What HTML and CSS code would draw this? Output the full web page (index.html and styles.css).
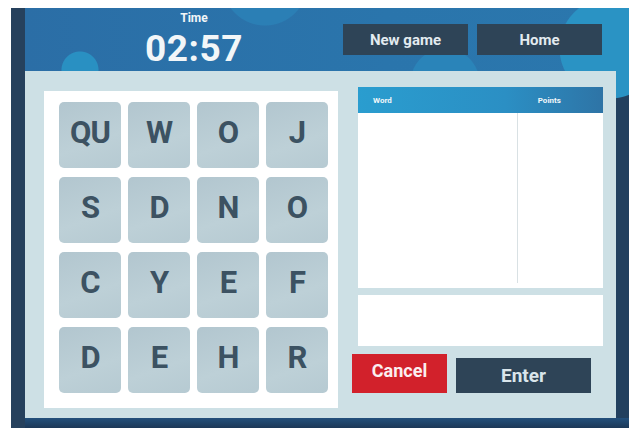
FILE: index.html
```html
<!DOCTYPE html>
<html lang="en">
<head>
<meta charset="utf-8">
<title>Word Grid</title>
<link rel="stylesheet" href="styles.css">
</head>
<body>
<div class="app">
  <header class="topbar">
    <div class="timer">
      <div class="timer-label">Time</div>
      <div class="timer-value">02:57</div>
    </div>
    <nav class="actions">
      <button class="btn btn-dark">New game</button>
      <button class="btn btn-dark">Home</button>
    </nav>
  </header>
  <main class="panel">
    <section class="board">
      <div class="tile">QU</div><div class="tile">W</div><div class="tile">O</div><div class="tile">J</div>
      <div class="tile">S</div><div class="tile">D</div><div class="tile">N</div><div class="tile">O</div>
      <div class="tile">C</div><div class="tile">Y</div><div class="tile">E</div><div class="tile">F</div>
      <div class="tile">D</div><div class="tile">E</div><div class="tile">H</div><div class="tile">R</div>
    </section>
    <section class="side">
      <div class="words">
        <div class="words-head"><span class="col-word">Word</span><span class="col-points">Points</span></div>
        <div class="words-body"><div class="cell-word"></div><div class="cell-points"></div></div>
      </div>
      <div class="entry"></div>
      <div class="controls">
        <button class="btn btn-cancel">Cancel</button>
        <button class="btn btn-enter">Enter</button>
      </div>
    </section>
  </main>
  <div class="floor"></div>
</div>
</body>
</html>
```
FILE: styles.css
```css
* { box-sizing: border-box; }

html, body { margin: 0; background: #ffffff; }

body {
  padding: 8px 0 0 11px;
  font-family: Roboto, "Liberation Sans", sans-serif;
}

.app {
  width: 618px;
  height: 420px;
  overflow: hidden;
  border-left: 14px solid #26415d;
  background:
    radial-gradient(circle at 585px 40px, #2a93c4 0 50px, transparent 51px),
    radial-gradient(circle at 55px 62px, #2990c2 0 18px, transparent 19px),
    radial-gradient(circle at 240px -25px, #2b7fb5 0 42px, transparent 43px),
    radial-gradient(circle at 420px 75px, #2a84b9 0 34px, transparent 35px),
    linear-gradient(90deg, #2b6ea6 0%, #2a75ac 60%, #2b77ad 97%, #22405f 97.5%);
  display: flex;
  flex-direction: column;
}

/* header with timer and navigation */
.topbar {
  height: 63px;
  display: flex;
  align-items: flex-start;
}

.timer {
  width: 98px;
  margin-left: 120px;
  padding-top: 3px;
  text-align: center;
  color: #f2f6f8;
  font-weight: 700;
}

.timer-label { font-size: 12px; line-height: 14px; }

.timer-value {
  margin-top: 6px;
  font-size: 37px;
  line-height: 36px;
  letter-spacing: 0.5px;
}

.actions {
  display: flex;
  gap: 9px;
  margin-left: 100px;
  margin-top: 16px;
}

.btn {
  border: 0;
  padding: 0;
  font-family: Roboto, "Liberation Sans", sans-serif;
  font-weight: 700;
  cursor: pointer;
}

.btn-dark {
  width: 125px;
  height: 31px;
  background: #2e4457;
  color: #e3ebf0;
  font-size: 15px;
}

/* main light panel */
.panel {
  width: 591px;
  height: 347px;
  background: #cde0e5;
  display: flex;
  gap: 20px;
  padding: 16px 13px 0 19px;
}

.board {
  width: 294px;
  height: 317px;
  margin-top: 4px;
  background: #ffffff;
  padding: 11px 11px 0 15px;
  display: grid;
  grid-template-columns: repeat(4, 62px);
  grid-template-rows: repeat(4, 66px);
  column-gap: 7px;
  row-gap: 9px;
}

.tile {
  border-radius: 5px;
  background: linear-gradient(160deg, #b2c6cf 0%, #bdd0d7 60%, #b6cad2 100%);
  color: #3c5262;
  font-size: 31px;
  font-weight: 700;
  display: flex;
  align-items: center;
  justify-content: center;
  padding-bottom: 6px;
  letter-spacing: -1px;
}

.side {
  width: 245px;
  display: flex;
  flex-direction: column;
}

.words { background: #ffffff; height: 201px; display: flex; flex-direction: column; }

.words-head {
  height: 26px;
  background: linear-gradient(90deg, #2a9dcf 0%, #2b8fc4 60%, #2e74a6 100%);
  color: #f1f7fa;
  font-size: 8px;
  font-weight: 700;
  display: flex;
  align-items: center;
}

.col-word { margin-left: 15px; }
.col-points { margin-left: 146px; }

.words-body { flex: 1; display: flex; }
.cell-word { width: 160px; border-right: 1px solid #d9e1e4; margin-bottom: 5px; }
.cell-points { flex: 1; }

.entry {
  margin-top: 7px;
  height: 51px;
  background: #ffffff;
}

.controls {
  margin-top: 8px;
  margin-left: -6px;
  display: flex;
  align-items: flex-end;
  gap: 9px;
}

.btn-cancel {
  width: 95px;
  height: 39px;
  background: #d2212b;
  color: #fbeef0;
  font-size: 18px;
  padding-bottom: 6px;
}

.btn-enter {
  width: 135px;
  height: 35px;
  background: #2e4457;
  color: #d9e5eb;
  font-size: 19px;
}

.floor {
  flex: 1;
  background: linear-gradient(180deg, #23507c 0%, #1c3857 100%);
}
```
